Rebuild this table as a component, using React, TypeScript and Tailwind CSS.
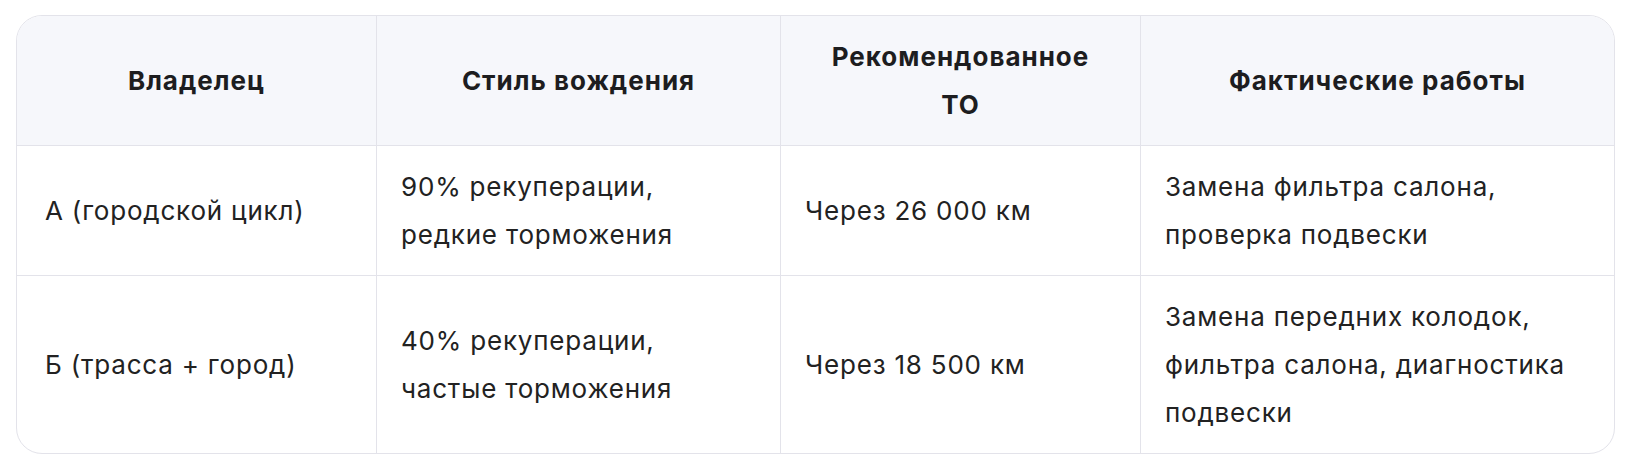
const headers = [["Владелец"], ["Стиль вождения"], ["Рекомендованное", "ТО"], ["Фактические работы"]];

const rows = [
  [["А (городской цикл)"], ["90% рекуперации,", "редкие торможения"], ["Через 26 000 км"], ["Замена фильтра салона,", "проверка подвески"]],
  [
    ["Б (трасса + город)"],
    ["40% рекуперации,", "частые торможения"],
    ["Через 18 500 км"],
    ["Замена передних колодок,", "фильтра салона, диагностика", "подвески"],
  ],
];

function Lines({ lines }: { lines: string[] }) {
  return (
    <span>
      {lines.map((l, i) => (
        <span key={i}>
          {i > 0 && <br />}
          {l}
        </span>
      ))}
    </span>
  );
}

export default function App() {
  return (
    <div className="min-h-screen bg-white pl-4 pt-[15px] font-['Inter',sans-serif] tracking-[0.8px]">
      <div className="w-[1599px] overflow-hidden rounded-[26px] border border-[#e3e3ea]">
        <div className="grid grid-cols-[359px_404px_360px_1fr]">
          {headers.map((h, i) => (
            <div
              key={i}
              className={`flex items-center justify-center bg-[#f6f7fb] px-6 py-[16.5px] text-center text-[26px] leading-[48px] font-bold tracking-[1px] text-[#1d1d1f] ${i > 0 ? "border-l border-[#e3e3ea]" : ""}`}
            >
              <Lines lines={h} />
            </div>
          ))}
          {rows.map((row, r) =>
            row.map((cell, i) => (
              <div
                key={`${r}-${i}`}
                className={`flex items-center border-t border-[#e3e3ea] py-[16.5px] pr-6 text-[26px] leading-[48px] text-[#222222] ${i > 0 ? "border-l pl-6" : "pl-7"}`}
              >
                <Lines lines={cell} />
              </div>
            ))
          )}
        </div>
      </div>
    </div>
  );
}
